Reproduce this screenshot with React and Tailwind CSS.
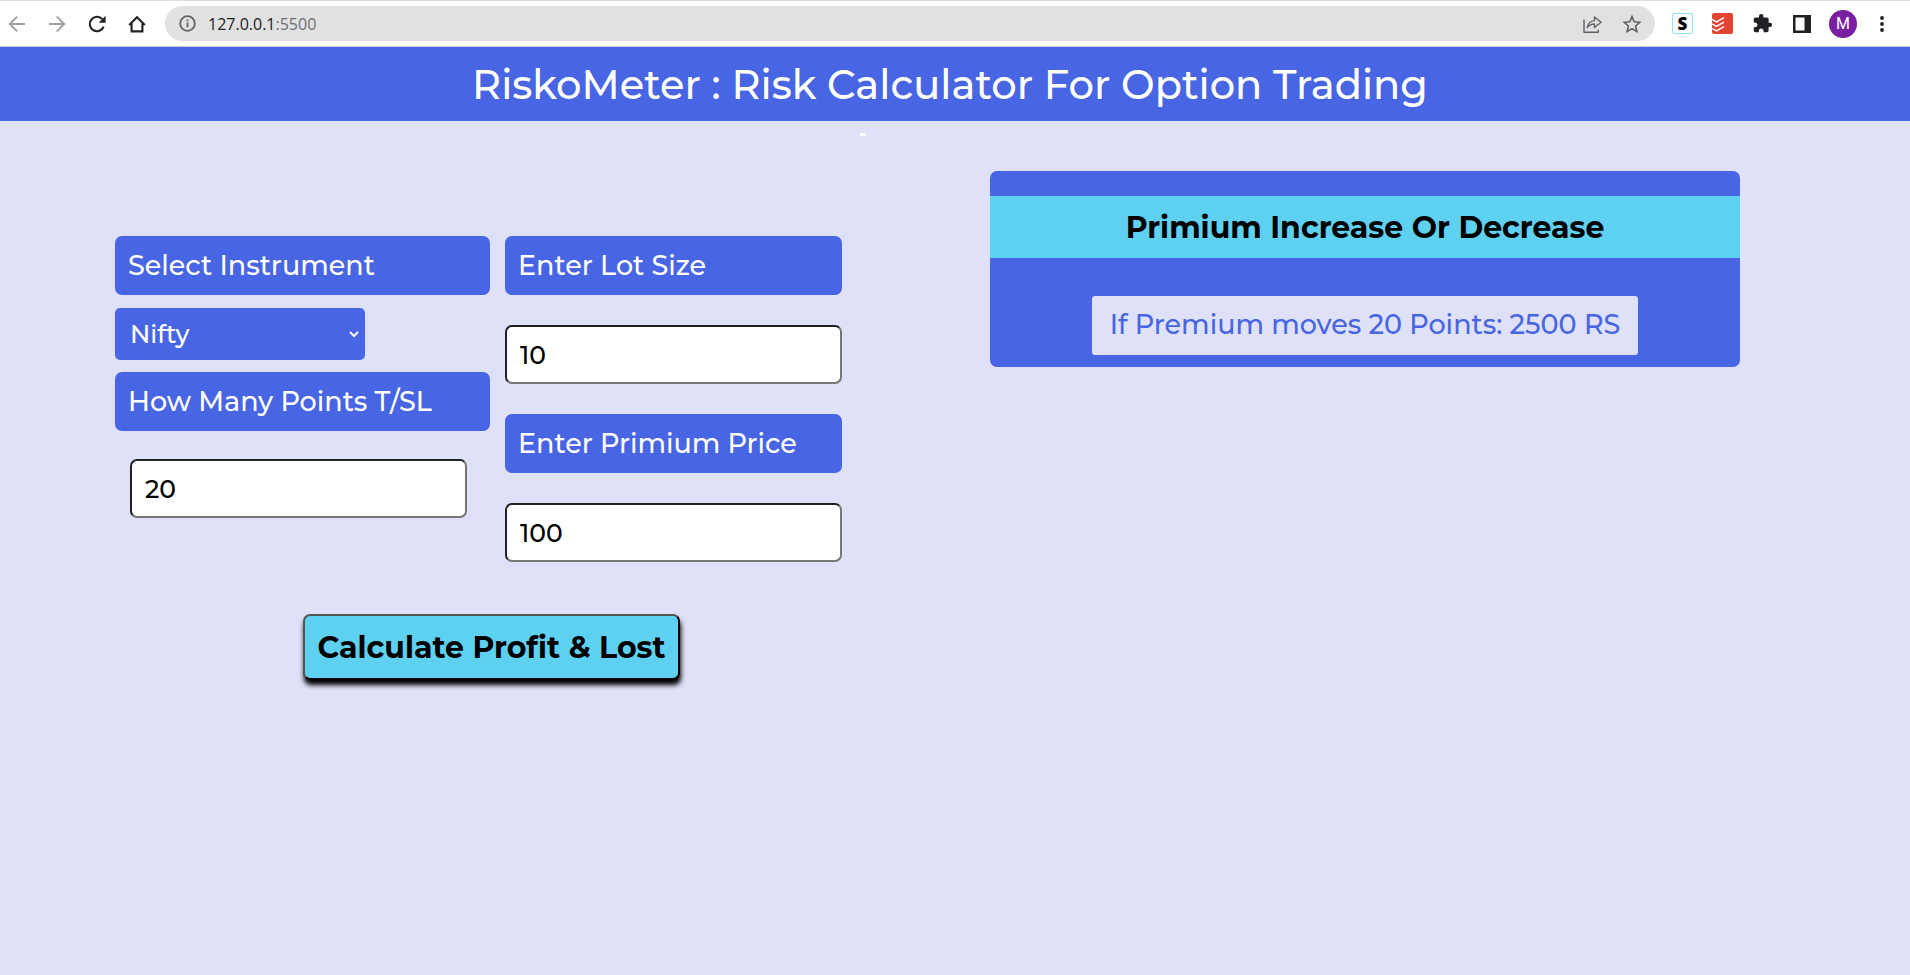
import { useState } from "react";

const fieldLabel =
  "block rounded-[7px] bg-[#4865e3] px-[13px] h-[59px] leading-[60px] text-[27px] font-medium text-white whitespace-nowrap";
const fieldInput =
  "block h-[59px] w-full max-w-[337px] rounded-[7px] border-2 [border-style:inset] border-[#767676] bg-white px-[13px] text-[25px] font-medium text-black outline-none";

function IconButton({ label, className = "", children }) {
  return (
    <button type="button" aria-label={label} className={`flex size-5 shrink-0 items-center justify-center ${className}`}>
      {children}
    </button>
  );
}

function BrowserBar() {
  return (
    <div className="flex h-[47px] items-center border-t border-b border-t-[#e5dada] border-b-[#c9cacb] bg-white pl-[7px] pr-[18px]">
      <div className="flex shrink-0 items-center gap-5">
        <IconButton label="Back">
          <svg width="20" height="20" viewBox="0 0 20 20" fill="none" stroke="#9fa0a2" strokeWidth="1.9">
            <path d="M18 10H3M10.2 2.6L2.8 10l7.4 7.4" />
          </svg>
        </IconButton>
        <IconButton label="Forward">
          <svg width="20" height="20" viewBox="0 0 20 20" fill="none" stroke="#9fa0a2" strokeWidth="1.9">
            <path d="M2 10h15M9.800 2.600l7.400 7.400-7.400 7.400" />
          </svg>
        </IconButton>
        <IconButton label="Reload">
          <svg width="20" height="20" viewBox="0 0 20 20" fill="none">
            <path d="M16.7 12.6A7.2 7.2 0 1 1 15.2 5" stroke="#202124" strokeWidth="2.1" />
            <path d="M18.6 1.8v7h-7z" fill="#202124" />
          </svg>
        </IconButton>
        <IconButton label="Home">
          <svg width="20" height="20" viewBox="0 0 20 20" fill="none" stroke="#202124" strokeWidth="2.1">
            <path d="M2.2 10.9L10 3.2l7.8 7.7M4.6 9.4v8h10.8v-8" />
          </svg>
        </IconButton>
      </div>
      <div className="ml-[18px] flex h-[35px] min-w-0 flex-1 items-center rounded-full bg-[#e1e1e1] pl-[14px] pr-[13px]">
        <svg className="shrink-0" width="17" height="17" viewBox="0 0 17 17" fill="none" stroke="#5f6368" strokeWidth="1.8">
          <circle cx="8.5" cy="8.5" r="7.3" />
          <path d="M8.5 7.6v4.6M8.5 4.4v1.8" />
        </svg>
        <span className="ml-3 flex-1 truncate font-['Open_Sans',sans-serif] text-[16px] text-[#202124]">
          127.0.0.1<span className="text-[#6b6f73]">:5500</span>
        </span>
        <IconButton label="Share" className="mr-5">
          <svg width="20" height="20" viewBox="0 0 20 20" fill="none" stroke="#5f6368" strokeWidth="1.4" strokeLinejoin="round">
            <path d="M2 5.500v12.800h14.300v-2.600" />
            <path d="M5.200 13.600c.7-4.400 3-6.700 7.300-7V3l6.600 5.300-6.600 5.200V10c-3.200 0-5.400 1-7.300 3.600z" />
          </svg>
        </IconButton>
        <IconButton label="Bookmark">
          <svg width="20" height="20" viewBox="0 0 20 20" fill="none" stroke="#5f6368" strokeWidth="1.6">
            <path d="M10 2.600l2.200 5.200 5.600.5-4.200 3.700 1.300 5.500-4.900-2.900-4.900 2.900 1.300-5.500L2.200 8.300l5.600-.5z" />
          </svg>
        </IconButton>
      </div>
      <div className="ml-[17px] flex shrink-0 items-center">
        <button
          type="button"
          className="flex size-[21px] items-center justify-center rounded-[2px] border border-[#8fe3f7] bg-white font-['Open_Sans',sans-serif] text-[17px] leading-none font-extrabold text-black"
        >
          S
        </button>
        <IconButton label="Tasks" className="ml-[19px]">
          <svg width="21" height="21" viewBox="0 0 21 21" className="shrink-0">
            <rect width="21" height="21" rx="2" fill="#e44332" />
            <path d="M0 6.400l4.500 2.500L12 4.600M0 10.900l4.500 2.500L12 9.100M0 15.400l4.500 2.500L12 13.600" fill="none" stroke="#fff" strokeWidth="1.500" />
          </svg>
        </IconButton>
        <IconButton label="Extensions" className="ml-5">
          <svg width="21" height="21" viewBox="0 0 24 24" fill="#202124" className="shrink-0">
            <path d="M20.500 11H19V7c0-1.100-.9-2-2-2h-4V3.500a2.500 2.500 0 0 0-5 0V5H4c-1.100 0-1.990.9-1.990 2v3.800H3.500c1.490 0 2.700 1.210 2.700 2.700s-1.210 2.700-2.700 2.700H2V20c0 1.100.9 2 2 2h3.800v-1.500c0-1.490 1.210-2.700 2.700-2.700s2.700 1.210 2.700 2.700V22H17c1.100 0 2-.9 2-2v-4h1.500a2.500 2.500 0 0 0 0-5z" />
          </svg>
        </IconButton>
        <IconButton label="Side panel" className="ml-5">
          <svg width="18" height="18" viewBox="0 0 18 18" className="shrink-0">
            <rect width="18" height="18" fill="#202124" />
            <rect x="2.500" y="2.500" width="9" height="13" fill="#fff" />
          </svg>
        </IconButton>
        <button
          type="button"
          className="ml-[17px] flex size-7 items-center justify-center rounded-full bg-[#7b1fa2] font-['Roboto',sans-serif] text-[16px] leading-none text-white"
        >
          M
        </button>
        <IconButton label="Menu" className="ml-[15px]">
          <svg width="20" height="20" viewBox="0 0 20 20" fill="#202124">
            <circle cx="10" cy="4" r="1.900" />
            <circle cx="10" cy="10" r="1.900" />
            <circle cx="10" cy="16" r="1.900" />
          </svg>
        </IconButton>
      </div>
    </div>
  );
}

export default function App() {
  const [instrument, setInstrument] = useState("Nifty");
  const [points, setPoints] = useState("20");
  const [lot, setLot] = useState("10");
  const [price, setPrice] = useState("100");

  return (
    <div className="min-h-screen bg-[#dfe1f8] font-['Montserrat','Inter',sans-serif]">
      <BrowserBar />
      <header className="flex h-[74px] items-center justify-center bg-[#4865e3] pt-[2px] pr-[10px]">
        <h1 className="text-[40px] font-medium text-white">RiskoMeter : Risk Calculator For Option Trading</h1>
      </header>
      <div className="mt-3 ml-[45%] h-[3px] w-[6px] bg-white" />
      <main className="flex items-start justify-between gap-10 pt-[35px] pr-[170px] pl-[115px]">
        <form className="pt-[65px]" onSubmit={(e) => e.preventDefault()}>
          <div className="grid grid-cols-[375px_337px] gap-[15px]">
            <div>
              <label htmlFor="instrument" className={fieldLabel}>Select Instrument</label>
              <select
                id="instrument"
                value={instrument}
                onChange={(e) => setInstrument(e.target.value)}
                className="mt-[13px] block h-[52px] w-[250px] rounded-[5px] border-[3px] border-[#4865e3] bg-[#4865e3] px-2 text-[25px] font-medium text-white outline-none"
              >
                <option>Nifty</option>
                <option>Bank Nifty</option>
              </select>
              <label htmlFor="points" className={`mt-3 ${fieldLabel}`}>How Many Points T/SL</label>
              <div className="mt-7 pl-[15px]">
                <input id="points" type="text" value={points} onChange={(e) => setPoints(e.target.value)} className={fieldInput} />
              </div>
            </div>
            <div className="flex flex-col gap-[30px]">
              <label htmlFor="lot" className={fieldLabel}>Enter Lot Size</label>
              <input id="lot" type="text" value={lot} onChange={(e) => setLot(e.target.value)} className={fieldInput} />
              <label htmlFor="price" className={fieldLabel}>Enter Primium Price</label>
              <input id="price" type="text" value={price} onChange={(e) => setPrice(e.target.value)} className={fieldInput} />
            </div>
          </div>
          <div className="mt-[52px] flex justify-center pl-[26px]">
            <button
              type="submit"
              className="h-[66px] w-[377px] rounded-[7px] border-2 [border-style:outset] border-black bg-[#5ed1f1] text-[30px] font-bold whitespace-nowrap text-black shadow-[1px_5px_5px_#000]"
            >
              Calculate Profit &amp; Lost
            </button>
          </div>
        </form>
        <section className="w-full max-w-[750px] rounded-[7px] bg-[#4865e3] pt-[25px] pb-3">
          <h2 className="flex h-[62px] items-center justify-center bg-[#5ed1f1] text-[30px] font-bold text-black">
            Primium Increase Or Decrease
          </h2>
          <p className="mx-auto mt-[38px] flex h-[59px] w-[546px] max-w-full items-center justify-center rounded-[3px] bg-[#dfe1f8] text-[27px] font-medium whitespace-nowrap text-[#4865e3]">
            If Premium moves 20 Points: 2500 RS
          </p>
        </section>
      </main>
    </div>
  );
}
